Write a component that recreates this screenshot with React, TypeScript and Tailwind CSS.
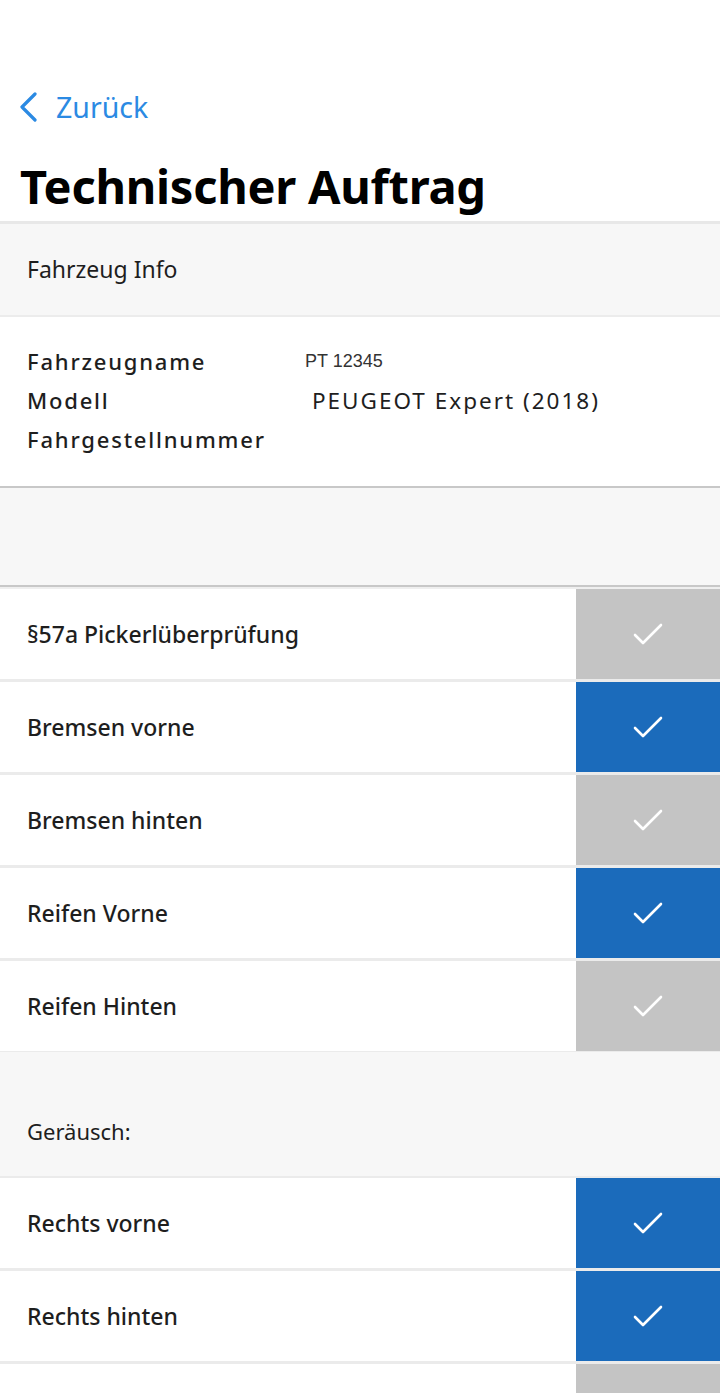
import React from "react";

const font = { fontFamily: '"Noto Sans", "Open Sans", sans-serif' };

function Check() {
  return (
    <svg width="30" height="22" viewBox="0 0 30 22" fill="none">
      <path d="M2 12 L10 20 L28 2" stroke="white" strokeWidth="2.6" strokeLinecap="round" strokeLinejoin="round" />
    </svg>
  );
}

function Row({ label, on, last }: { label: string; on: boolean; last?: boolean }) {
  return (
    <div className={"flex h-[90px] box-content bg-white " + (last ? "border-b border-[#ebebeb]" : "border-b-[3px] border-[#ebebeb]")}>
      <div className="flex flex-1 items-center pl-[27px] text-[23px] font-medium text-[#1e1e1e]">{label}</div>
      <div className={"flex w-[144px] items-center justify-center " + (on ? "bg-[#1b6bbb]" : "bg-[#c4c4c4]")}>
        <Check />
      </div>
    </div>
  );
}

export default function App() {
  const rows1: [string, boolean][] = [
    ["§57a Pickerlüberprüfung", false],
    ["Bremsen vorne", true],
    ["Bremsen hinten", false],
    ["Reifen Vorne", true],
    ["Reifen Hinten", false],
  ];
  const rows2: [string, boolean][] = [
    ["Rechts vorne", true],
    ["Rechts hinten", true],
    ["", false],
  ];
  return (
    <div className="h-[1393px] w-[720px] overflow-hidden bg-white" style={font}>
      <div className="flex flex-col pb-[7px]">
        <div className="mt-[89px] flex h-[36px] items-center pl-[18px]">
          <svg width="20" height="30" viewBox="0 0 20 30" fill="none">
            <path d="M17 2 L4 15 L17 28" stroke="#2b8ae3" strokeWidth="3.2" strokeLinecap="round" strokeLinejoin="round" />
          </svg>
          <span className="ml-[18px] text-[28.5px] leading-none text-[#2b8ae3]">Zurück</span>
        </div>
        <h1 className="mt-[33px] pl-[20px] text-[47px] font-bold leading-[56px] tracking-[-0.25px] text-black">Technischer Auftrag</h1>
      </div>

      <div className="flex h-[96px] items-center border-y-[3px] border-t-[#e8e8e8] border-b-[#ececec] border-b-2 bg-[#f7f7f7] pl-[27px] text-[23px] text-[#1e1e1e]">
        Fahrzeug Info
      </div>

      <div className="bg-white pb-[27px] pt-[25px]">
        <div className="flex h-[39px] items-center">
          <div className="w-[305px] pl-[27px] text-[22px] font-medium tracking-[1.8px] text-[#1e1e1e]">Fahrzeugname</div>
          <div className="text-[18px] text-[#333]" style={{ fontFamily: '"Liberation Sans", Arial, sans-serif' }}>PT 12345</div>
        </div>
        <div className="flex h-[39px] items-center">
          <div className="w-[305px] pl-[27px] text-[22px] font-medium tracking-[1.8px] text-[#1e1e1e]">Modell</div>
          <div className="pl-[7px] text-[22.5px] tracking-[2px] text-[#1e1e1e]">PEUGEOT Expert (2018)</div>
        </div>
        <div className="flex h-[39px] items-center">
          <div className="w-[305px] pl-[27px] text-[22px] font-medium tracking-[1.8px] text-[#1e1e1e]">Fahrgestellnummer</div>
          <div />
        </div>
      </div>

      <div className="h-[101px] border-y-2 border-[#c8c8c8] bg-[#f7f7f7]" />
      <div className="h-[2px] bg-[#efefef]" />

      {rows1.map(([l, o], i) => (
        <Row key={l} label={l} on={o} last={i === rows1.length - 1} />
      ))}

      <div className="flex h-[126px] items-end border-b-2 border-[#ebebeb] bg-[#f7f7f7] pb-[28px] pl-[27px] text-[22px] text-[#1e1e1e]">
        Geräusch:
      </div>

      {rows2.map(([l, o], i) => (
        <Row key={i} label={l} on={o} />
      ))}
    </div>
  );
}
